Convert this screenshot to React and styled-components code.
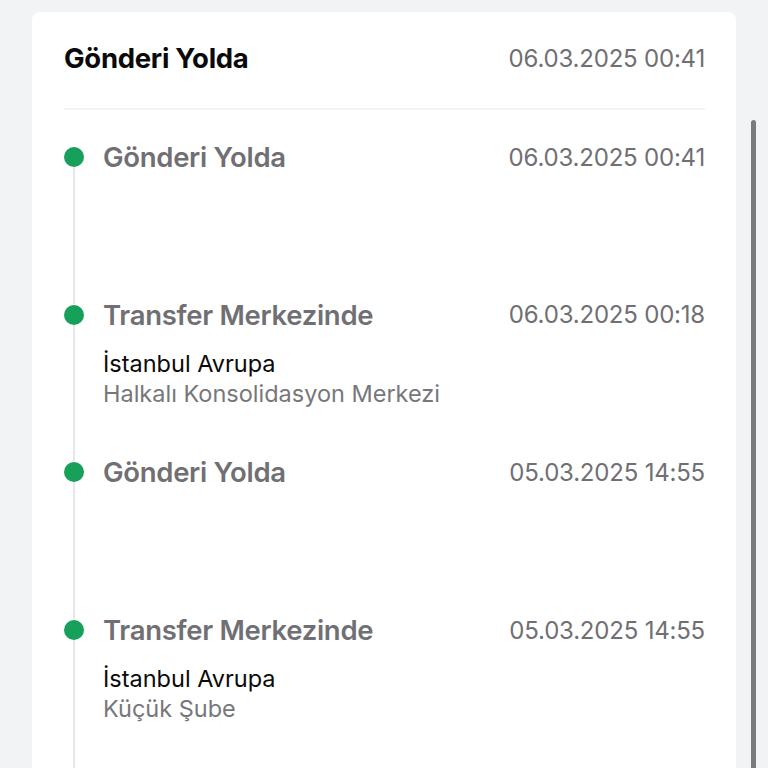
import React from 'react'
import styled, { createGlobalStyle } from 'styled-components'

const events = [
    { title: 'Gönderi Yolda', date: '06.03.2025 00:41' },
    { title: 'Transfer Merkezinde', date: '06.03.2025 00:18', city: 'İstanbul Avrupa', branch: 'Halkalı Konsolidasyon Merkezi' },
    { title: 'Gönderi Yolda', date: '05.03.2025 14:55' },
    { title: 'Transfer Merkezinde', date: '05.03.2025 14:55', city: 'İstanbul Avrupa', branch: 'Küçük Şube' },
]

const App = () => {
    return (
        <>
            <GlobalStyle />
            <Page>
                <Card>
                    <Header>
                        <HeaderTitle>Gönderi Yolda</HeaderTitle>
                        <DateText>06.03.2025 00:41</DateText>
                    </Header>
                    <Timeline>
                        {events.map((ev, i) => (
                            <Item key={i}>
                                <Rail>
                                    <Dot />
                                    <Line />
                                </Rail>
                                <Body>
                                    <TitleRow>
                                        <Title>{ev.title}</Title>
                                        <DateText>{ev.date}</DateText>
                                    </TitleRow>
                                    {ev.city && (
                                        <Place>
                                            <City>{ev.city}</City>
                                            <Branch>{ev.branch}</Branch>
                                        </Place>
                                    )}
                                </Body>
                            </Item>
                        ))}
                    </Timeline>
                </Card>
                <ScrollThumb />
            </Page>
        </>
    )
}

const GlobalStyle = createGlobalStyle`
    html, body {
        margin: 0;
        padding: 0;
        background: #f2f3f5;
        font-family: Inter, "Noto Sans", sans-serif;
        -webkit-font-smoothing: antialiased;
    }
`

const Page = styled.div`
    position: relative;
    height: 768px;
    overflow: hidden;
    padding: 12px 32px 0;
    box-sizing: border-box;
`

const Card = styled.div`
    background: #ffffff;
    border-radius: 8px;
    padding: 0 31px 0 32px;
    min-height: 800px;
`

const Header = styled.div`
    display: flex;
    align-items: center;
    justify-content: space-between;
    height: 98px;
    padding-bottom: 4px;
    box-sizing: border-box;
    border-bottom: 2px solid #f1f2f4;
`

const HeaderTitle = styled.h1`
    margin: 0;
    font-size: 27.5px;
    font-weight: 700;
    color: #0a0a0a;
    letter-spacing: -0.3px;
`

const DateText = styled.span`
    font-size: 24px;
    color: #6f6f74;
    letter-spacing: -0.2px;
    line-height: 29px;
`

const Timeline = styled.div`
    display: flex;
    flex-direction: column;
    padding-top: 36px;
`

const Item = styled.div`
    display: flex;
    min-height: 157.7px;
`

const Rail = styled.div`
    display: flex;
    flex-direction: column;
    align-items: center;
    width: 20px;
    margin-right: 19px;
`

const Dot = styled.span`
    width: 20px;
    height: 20px;
    border-radius: 50%;
    background: #17a05a;
    margin-top: 1px;
    flex-shrink: 0;
`

const Line = styled.span`
    flex: 1;
    width: 2px;
    background: #e6e7ea;
`

const Body = styled.div`
    flex: 1;
    display: flex;
    flex-direction: column;
`

const TitleRow = styled.div`
    display: flex;
    justify-content: space-between;
    align-items: center;
    height: 22px;
`

const Title = styled.span`
    font-size: 27.5px;
    font-weight: 600;
    color: #707074;
    letter-spacing: -0.3px;
`

const Place = styled.div`
    display: flex;
    flex-direction: column;
    margin-top: 23px;
    gap: 1px;
`

const City = styled.span`
    font-size: 23.5px;
    line-height: 29px;
    color: #0a0a0a;
`

const Branch = styled.span`
    font-size: 23.5px;
    line-height: 29px;
    color: #77777b;
`

const ScrollThumb = styled.div`
    position: absolute;
    right: 12px;
    top: 120px;
    width: 5px;
    height: 700px;
    border-radius: 3px;
    background: #7b7b7e;
`

export default App
